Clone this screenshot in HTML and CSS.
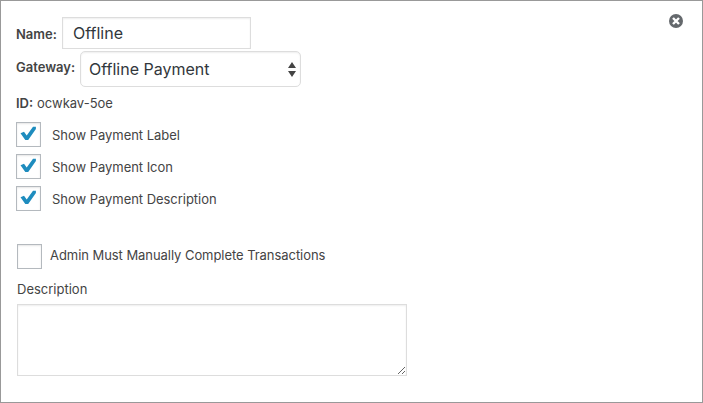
FILE: index.html
```html
<!DOCTYPE html>
<html lang="en">
<head>
	<meta charset="utf-8">
	<title>Payment Method</title>
	<link rel="stylesheet" href="styles.css">
</head>
<body>
	<form class="panel">
		<button type="button" class="close" aria-label="Remove">
			<svg width="14" height="14" viewBox="0 0 14 14">
				<circle cx="7" cy="7" r="7" fill="#64686c"/>
				<path d="M4 4l6 6M10 4l-6 6" stroke="#fff" stroke-width="2.4"/>
			</svg>
		</button>

		<div class="row name-row">
			<label class="title name-title" for="name">Name:</label>
			<input type="text" id="name" class="text-input" value="Offline">
		</div>
		<div class="row gateway-row">
			<label class="title gateway-title" for="gateway">Gateway:</label>
			<div class="select-wrap">
				<select id="gateway">
					<option>Offline Payment</option>
				</select>
				<svg class="arrows" width="8" height="15" viewBox="0 0 8 15">
					<path d="M0 6l4-6 4 6zM0 9h8l-4 6z" fill="#444"/>
				</svg>
			</div>
		</div>
		<div class="row id-row"><span class="title id-title">ID:</span><span class="id-value">ocwkav-5oe</span></div>

		<div class="checks">
			<label class="check"><input type="checkbox" checked><svg class="tick" width="17" height="16" viewBox="0 0 17 16"><path d="M.5 7.3L4 5.8l2.7 3.6L13 .8l2.9-.1v2.2L8.2 14H5.3z" fill="#1e8cbe"/></svg><span class="label-text">Show Payment Label</span></label>
			<label class="check"><input type="checkbox" checked><svg class="tick" width="17" height="16" viewBox="0 0 17 16"><path d="M.5 7.3L4 5.8l2.7 3.6L13 .8l2.9-.1v2.2L8.2 14H5.3z" fill="#1e8cbe"/></svg><span class="label-text">Show Payment Icon</span></label>
			<label class="check"><input type="checkbox" checked><svg class="tick" width="17" height="16" viewBox="0 0 17 16"><path d="M.5 7.3L4 5.8l2.7 3.6L13 .8l2.9-.1v2.2L8.2 14H5.3z" fill="#1e8cbe"/></svg><span class="label-text">Show Payment Description</span></label>
		</div>

		<div class="extra">
			<label class="check admin"><input type="checkbox"><span class="label-text">Admin Must Manually Complete Transactions</span></label>
			<label class="desc-label" for="description">Description</label>
			<textarea id="description"></textarea>
		</div>
	</form>
</body>
</html>
```
FILE: styles.css
```css
* {
	box-sizing: border-box;
}
body {
	margin: 0;
	background: #fff;
	color: #444;
	font-family: Inter, "Liberation Sans", sans-serif;
	font-size: 13px;
	line-height: 18px;
}
input, select, textarea {
	margin: 0;
	color: #32373c;
	font-family: inherit;
	border: 1px solid #ddd;
	border-radius: 0;
	background: #fff;
	box-shadow: inset 0 1px 2px rgba(0,0,0,.07);
	outline: none;
}
.panel {
	position: relative;
	height: 100vh;
	margin: 0;
	padding: 16px 15px;
	border: 1px solid #999;
}
.close {
	position: absolute;
	top: 13px;
	right: 19px;
	padding: 0;
	border: none;
	background: none;
	line-height: 0;
}

.row {
	display: flex;
	align-items: center;
	white-space: nowrap;
}
.title {
	font-weight: 600;
	flex: none;
}
.name-row {
	height: 32px;
}
.name-title {
	width: 46px;
	padding-top: 2px;
}
.text-input {
	width: 189px;
	height: 32px;
	padding: 3px 10px;
	font-size: 16px;
}
.gateway-row {
	height: 36px;
	margin-top: 2px;
}
.gateway-title {
	width: 64px;
	padding-bottom: 4px;
}
.select-wrap {
	position: relative;
}
select {
	appearance: none;
	display: block;
	width: 221px;
	height: 36px;
	padding: 0 8px;
	border-radius: 5px;
	font-size: 16px;
}
.arrows {
	position: absolute;
	right: 5px;
	top: 11px;
}
.id-row {
	margin-top: 7px;
}
.id-title {
	width: 21px;
}

.checks {
	display: flex;
	flex-direction: column;
	gap: 7px;
	margin-top: 10px;
}
.check {
	position: relative;
	display: flex;
	align-items: center;
	gap: 11px;
	height: 25px;
	white-space: nowrap;
	letter-spacing: -.04px;
}
.check input {
	appearance: none;
	flex: none;
	width: 25px;
	height: 25px;
	border-color: #b4b9be;
	box-shadow: inset 0 1px 2px rgba(0,0,0,.1);
}
.tick {
	position: absolute;
	left: 4px;
	top: 4px;
}

.extra {
	margin: 33px 0 0 1px;
}
.admin {
	gap: 8px;
	letter-spacing: -.055px;
}
.admin .label-text {
	padding-bottom: 3px;
}
.desc-label {
	display: block;
	margin-top: 11px;
}
textarea {
	display: block;
	width: 390px;
	height: 72px;
	margin-top: 6px;
}
```
